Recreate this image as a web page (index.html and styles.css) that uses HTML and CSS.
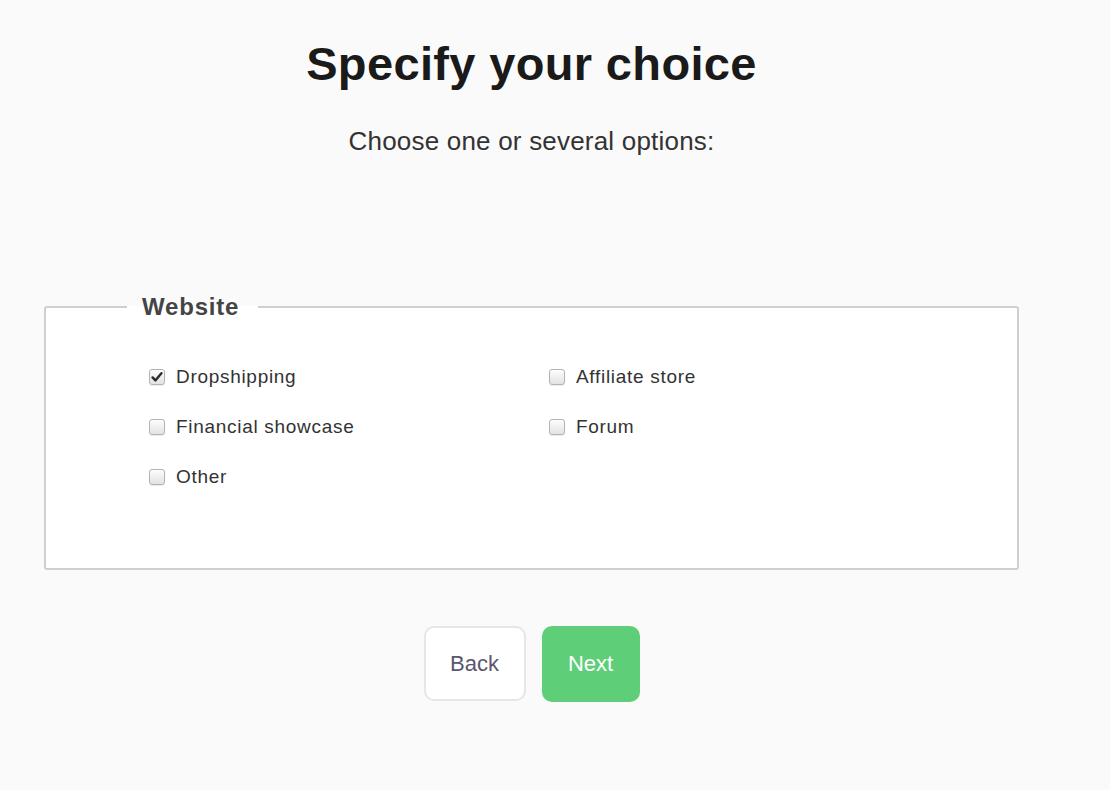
FILE: index.html
```html
<!DOCTYPE html>
<html lang="en">
<head>
    <meta charset="UTF-8">
    <meta name="viewport" content="width=device-width, initial-scale=1.0">
    <title>Specify your choice</title>
    <link rel="stylesheet" href="styles.css">
</head>
<body>

<!-- Step: choice -->
<div class="page">
    <h1 class="title">Specify your choice</h1>
    <p class="subtitle">Choose one or several options:</p>

    <fieldset class="group">
        <legend>Website</legend>
        <div class="options">
            <label class="option">
                <span class="box checked">
                    <svg width="12" height="12" viewBox="0 0 12 12"><path d="M1.6 6.4 L4.4 9.4 L10.4 2.2" fill="none" stroke="#2b2b2b" stroke-width="2.4" stroke-linecap="round" stroke-linejoin="round"/></svg>
                </span>
                Dropshipping
            </label>
            <label class="option"><span class="box"></span>Affiliate store</label>
            <label class="option"><span class="box"></span>Financial showcase</label>
            <label class="option"><span class="box"></span>Forum</label>
            <label class="option"><span class="box"></span>Other</label>
        </div>
    </fieldset>

    <div class="actions">
        <button class="btn btn-back">Back</button>
        <button class="btn btn-next">Next</button>
    </div>
</div>

</body>
</html>
```

FILE: styles.css
```css
body {
    font-family: "Liberation Sans", Arial, sans-serif;
    background-color: #fafafa;
    color: #333;
    margin: 0;
    padding: 0;
}

.page {
    width: 975px;
    margin-left: 44px;
    padding-top: 40px;
}

.title {
    margin: 0;
    font-size: 47px;
    line-height: 48px;
    font-weight: bold;
    letter-spacing: 0.35px;
    color: #1a1a1a;
    text-align: center;
}

.subtitle {
    margin: 38px 0 0;
    font-size: 26px;
    line-height: 30px;
    letter-spacing: 0.2px;
    color: #333;
    text-align: center;
}

.group {
    margin: 138px 0 0;
    padding: 0;
    border: 2px solid #cfcfcf;
    border-radius: 3px;
    background-color: #fff;
}

.group legend {
    margin-left: 81px;
    padding: 0 19px 0 15px;
    font-size: 24px;
    line-height: 26px;
    font-weight: bold;
    letter-spacing: 0.8px;
    color: #444;
}

.options {
    display: grid;
    grid-template-columns: 400px 400px;
    row-gap: 26px;
    padding: 45px 0 79px 103px;
}

.option {
    display: flex;
    align-items: center;
    height: 24px;
    font-size: 19px;
    letter-spacing: 0.7px;
    color: #333;
    cursor: pointer;
}

.box {
    width: 14px;
    height: 14px;
    margin-right: 11px;
    border: 1px solid #b3b3b3;
    border-radius: 3px;
    background: linear-gradient(#fdfdfd, #e2e2e2);
    box-shadow: 0 1px 1px rgba(0, 0, 0, 0.08);
    display: flex;
    align-items: center;
    justify-content: center;
}

.actions {
    display: flex;
    justify-content: center;
    gap: 16px;
    margin-top: 56px;
}

.btn {
    font-family: "Liberation Sans", Arial, sans-serif;
    font-size: 22px;
    border-radius: 10px;
    cursor: pointer;
}

.btn-back {
    width: 102px;
    height: 75px;
    background-color: #fff;
    border: 2px solid #e6e6e6;
    color: #5b5570;
}

.btn-next {
    width: 98px;
    height: 76px;
    background-color: #5fce79;
    border: none;
    color: #fff;
}
```
